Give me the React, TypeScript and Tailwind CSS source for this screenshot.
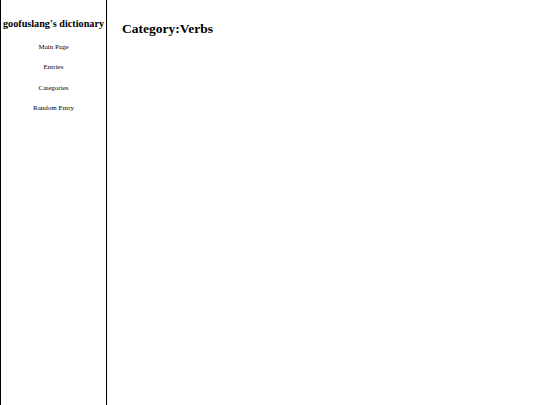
import React from 'react';

const links = ['Main Page', 'Entries', 'Categories', 'Random Entry'];

const App: React.FC = () => {
  return (
    <div className="flex h-[405px] w-[540px] bg-white font-['Liberation_Serif',serif] text-black">
      <div className="flex h-full w-[107px] shrink-0 flex-col items-center border-x border-black">
        <h2 className="mt-[17px] whitespace-nowrap text-[10.2px] font-bold leading-[14px]">goofuslang's dictionary</h2>
        <nav className="mt-[10px] flex flex-col items-center gap-[8.3px]">
          {links.map((l) => (
            <a key={l} className="text-[7px] leading-[12px]">
              {l}
            </a>
          ))}
        </nav>
      </div>
      <main className="pl-[15px] pt-[21px]">
        <h1 className="text-[13.5px] font-bold leading-[16px]">Category:Verbs</h1>
      </main>
    </div>
  );
};

export default App;
